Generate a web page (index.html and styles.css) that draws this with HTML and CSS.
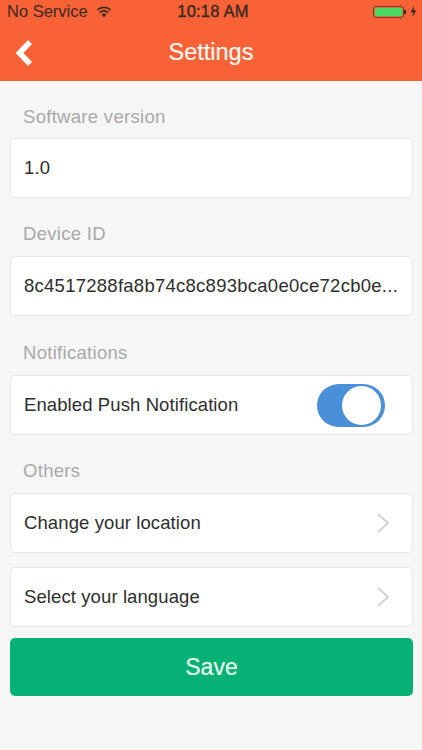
FILE: index.html
```html
<!DOCTYPE html>
<html lang="en">
<head>
<meta charset="utf-8">
<title>Settings</title>
<link rel="stylesheet" href="styles.css">
</head>
<body>
<header class="header">
  <div class="status">
    <div class="status-left">
      <span>No Service</span>
      <svg class="wifi" viewBox="0 0 16 12" width="16" height="12"><path d="M8 11.5 5.6 8.6a3.6 3.6 0 0 1 4.8 0z" fill="#3a2a22"/><path d="M3.7 6.6a6.3 6.3 0 0 1 8.6 0M1.4 4a9.6 9.6 0 0 1 13.2 0" fill="none" stroke="#3a2a22" stroke-width="1.6"/></svg>
    </div>
    <div class="status-time">10:18 AM</div>
    <div class="status-right">
      <div class="battery"><div class="battery-fill"></div></div>
      <div class="battery-tip"></div>
      <svg class="bolt" viewBox="0 0 6 10" width="7" height="11"><path d="M3.6 0 0.4 5.6h2.2L2 10l3.5-6H3.2z" fill="#3a2a22"/></svg>
    </div>
  </div>
  <div class="nav">
    <svg class="back" viewBox="0 0 20 28" width="20" height="28"><path d="M16 3 5.5 14 16 25" fill="none" stroke="#fff" stroke-width="5.6"/></svg>
    <div class="title">Settings</div>
  </div>
</header>
<main class="content">
  <div class="label first">Software version</div>
  <div class="card">1.0</div>
  <div class="label">Device ID</div>
  <div class="card device">8c4517288fa8b74c8c893bca0e0ce72cb0e...</div>
  <div class="label tall">Notifications</div>
  <div class="card row">
    <span>Enabled Push Notification</span>
    <div class="switch"><div class="knob"></div></div>
  </div>
  <div class="label">Others</div>
  <div class="card row">
    <span>Change your location</span>
    <svg class="chev" viewBox="0 0 14 22" width="14" height="22"><path d="M2 2l10 9-10 9" fill="none" stroke="#d4d4d4" stroke-width="2"/></svg>
  </div>
  <div class="card row second">
    <span>Select your language</span>
    <svg class="chev" viewBox="0 0 14 22" width="14" height="22"><path d="M2 2l10 9-10 9" fill="none" stroke="#d4d4d4" stroke-width="2"/></svg>
  </div>
  <button class="save">Save</button>
</main>
</body>
</html>
```
FILE: styles.css
```css
* { box-sizing: border-box; }
html, body { margin: 0; padding: 0; }
body {
  width: 422px;
  height: 750px;
  overflow: hidden;
  background: #f6f6f6;
  font-family: "Liberation Sans", Arial, sans-serif;
  color: #2e2e2e;
}
.header { background: #f96237; height: 81px; }
.status {
  height: 23px;
  display: grid;
  grid-template-columns: 1fr auto 1fr;
  align-items: center;
  padding: 0 5px 0 7px;
  font-size: 16.5px;
  color: #3a2a22;
}
.status-left { display: flex; align-items: center; gap: 8px; }
.status-time { font-size: 16.5px; letter-spacing: .2px; -webkit-text-stroke: .4px #3a2a22; margin-left: 2px; }
.status-right { display: flex; align-items: center; justify-content: flex-end; }
.battery {
  width: 31px; height: 12px;
  border: 1px solid #5c4a2c;
  border-radius: 3px;
  padding: 1px;
  background: #f96237;
}
.battery-fill { width: 100%; height: 100%; background: #4cd964; border-radius: 1px; }
.battery-tip { width: 2px; height: 4px; background: #3a2a22; margin-right: 4px; }
.nav {
  position: relative;
  height: 58px;
  display: flex;
  align-items: center;
  justify-content: center;
}
.back { position: absolute; left: 14px; top: 16px; }
.title { color: #fff; font-size: 23.5px; font-weight: 400; -webkit-text-stroke: .2px #fff; opacity: .95; }
.content { padding: 0 9px 0 10px; }
.label {
  height: 58px;
  padding: 26px 0 0 13px;
  font-size: 18.5px;
  line-height: 20px;
  letter-spacing: .3px;
  color: #a9a9a9;
}
.first { height: 57px; }
.tall { height: 59px; padding-top: 27px; }
.card {
  height: 60px;
  background: #fff;
  border: 1px solid #e6e6e6;
  border-radius: 5px;
  padding: 0 13px;
  display: flex;
  align-items: center;
  font-size: 18.5px;
  letter-spacing: .1px;
  color: #2e2e2e;
}
.device { letter-spacing: .26px; }
.row { justify-content: space-between; }
.second { margin-top: 14px; }
.switch {
  width: 68px; height: 43px;
  background: #4a90d9;
  border-radius: 22px;
  margin-right: 14px;
  padding: 2px 4px 2px 2px;
  display: flex;
  justify-content: flex-end;
}
.knob { width: 39px; height: 39px; background: #fff; border-radius: 50%; }
.chev { margin-right: 9px; }
.save {
  display: block;
  width: 403px;
  height: 58px;
  margin-top: 11px;
  border: 0;
  border-radius: 5px;
  background: #06b176;
  color: #e6f7f0;
  font-family: "Liberation Sans", Arial, sans-serif;
  font-size: 23px;
  -webkit-text-stroke: .2px #e6f7f0;
}
```
